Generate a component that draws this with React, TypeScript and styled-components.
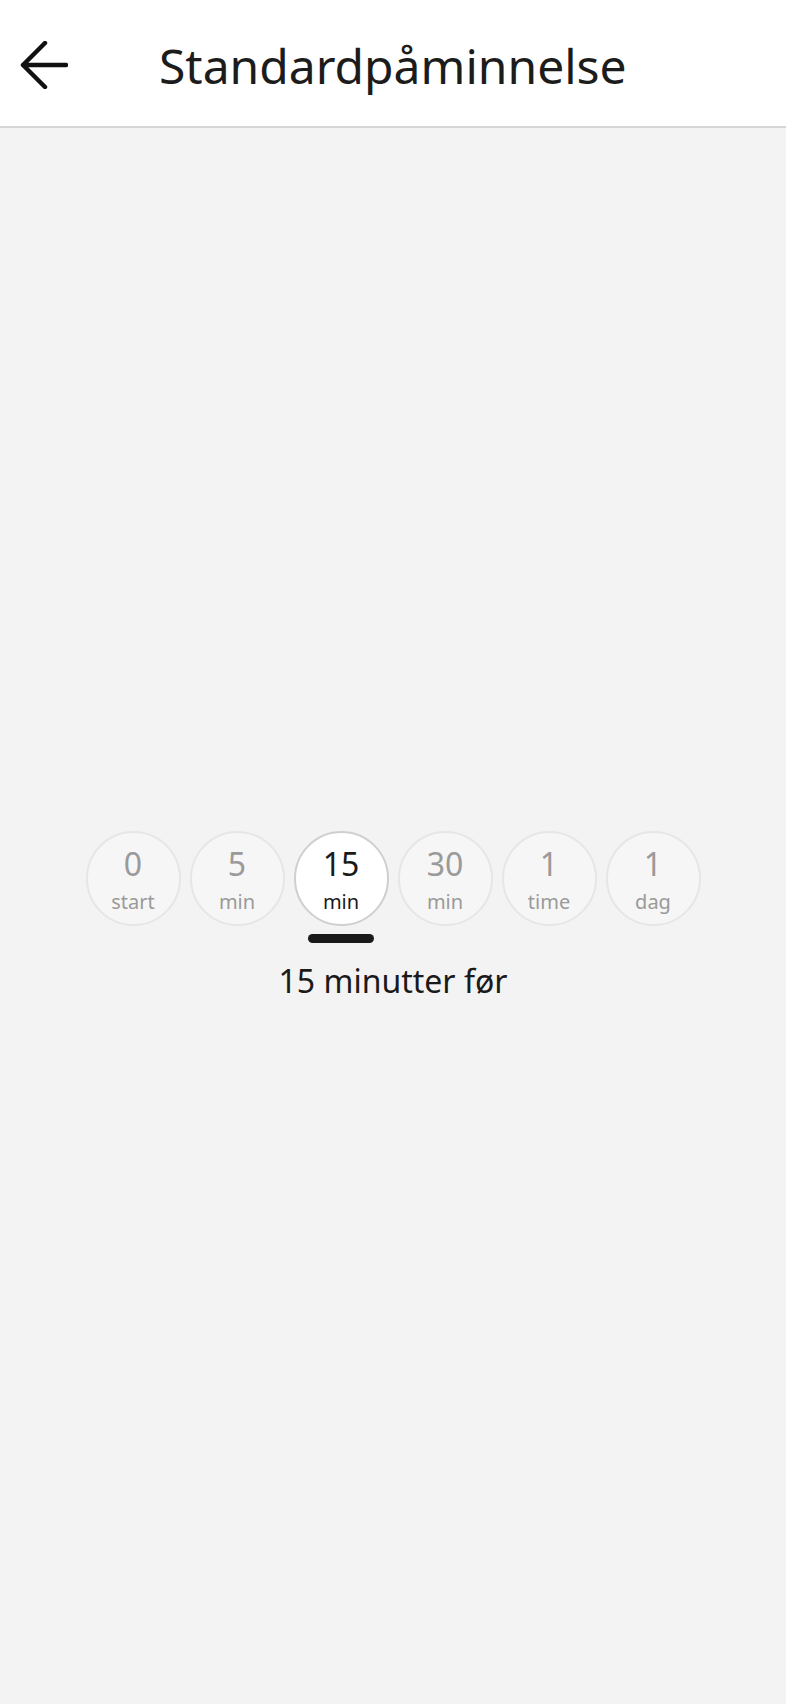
import React, { useState } from 'react';
import styled, { createGlobalStyle } from 'styled-components';

const GlobalStyle = createGlobalStyle`
  html, body {
    margin: 0;
    padding: 0;
    background: #f3f3f3;
    font-family: "Noto Sans", "Open Sans", sans-serif;
  }
`;

const Page = styled.div`
  display: flex;
  flex-direction: column;
  min-height: 100vh;
`;

const Header = styled.header`
  height: 126px;
  background: #ffffff;
  border-bottom: 2px solid #d6d6d9;
  display: flex;
  align-items: center;
  padding-left: 20px;
`;

const BackButton = styled.button`
  width: 48px;
  height: 48px;
  margin-top: 4px;
  padding: 0;
  border: none;
  background: none;
  display: flex;
  cursor: pointer;
`;

const Title = styled.h1`
  margin: 0 0 0 91px;
  padding-top: 6px;
  font-size: 48px;
  font-weight: 400;
  color: #1c1c1c;
  line-height: 1;
`;

const Body = styled.main`
  flex: 1;
  display: flex;
  flex-direction: column;
  align-items: center;
  justify-content: center;
`;

const Options = styled.div`
  display: flex;
  gap: 9px;
`;

const Option = styled.div`
  display: flex;
  flex-direction: column;
  align-items: center;
  gap: 8px;
`;

const Circle = styled.button<{ $selected?: boolean }>`
  width: 95px;
  height: 95px;
  box-sizing: border-box;
  border-radius: 50%;
  border: ${p => (p.$selected ? '2px solid #cfcfcf' : '2px solid #e6e6e6')};
  background: ${p => (p.$selected ? '#ffffff' : '#f6f6f6')};
  color: ${p => (p.$selected ? '#1a1a1a' : '#9a9a9a')};
  display: flex;
  flex-direction: column;
  align-items: center;
  justify-content: center;
  padding: 3px 0 0;
  font-family: inherit;
  cursor: pointer;
`;

const Value = styled.span`
  font-size: 32px;
  line-height: 1;
  margin-bottom: 12px;
`;

const Unit = styled.span`
  font-size: 20px;
  line-height: 1;
`;

const Indicator = styled.div<{ $visible?: boolean }>`
  width: 66px;
  height: 9px;
  border-radius: 5px;
  background: ${p => (p.$visible ? '#1a1a1a' : 'transparent')};
`;

const Summary = styled.div`
  margin-top: 16px;
  font-size: 32px;
  color: #1a1a1a;
`;

const options = [
  { value: '0', unit: 'start', text: 'Ved start' },
  { value: '5', unit: 'min', text: '5 minutter før' },
  { value: '15', unit: 'min', text: '15 minutter før' },
  { value: '30', unit: 'min', text: '30 minutter før' },
  { value: '1', unit: 'time', text: '1 time før' },
  { value: '1', unit: 'dag', text: '1 dag før' },
];

export default function App() {
  const [selected, setSelected] = useState(2);

  return (
    <Page>
      <GlobalStyle />
      <Header>
        <BackButton aria-label="Tilbake">
          <svg width="48" height="48" viewBox="0 0 48 48" fill="none">
            <path
              d="M46 24H3M25 2 3 24l22 22"
              stroke="#111"
              strokeWidth="4.5"
              strokeLinecap="round"
              strokeLinejoin="round"
            />
          </svg>
        </BackButton>
        <Title>Standardpåminnelse</Title>
      </Header>
      <Body>
        <Options>
          {options.map((o, i) => (
            <Option key={i}>
              <Circle $selected={i === selected} onClick={() => setSelected(i)}>
                <Value>{o.value}</Value>
                <Unit>{o.unit}</Unit>
              </Circle>
              <Indicator $visible={i === selected} />
            </Option>
          ))}
        </Options>
        <Summary>{options[selected].text}</Summary>
      </Body>
    </Page>
  );
}
